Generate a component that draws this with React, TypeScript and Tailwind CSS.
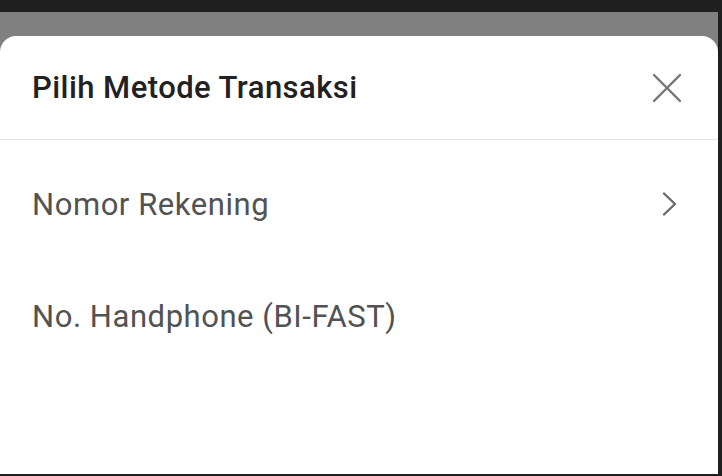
import React from "react";

const CloseIcon = () => (
  <svg width="30" height="30" viewBox="0 0 30 30" fill="none" stroke="#757575" strokeWidth="2.4" strokeLinecap="round">
    <path d="M2 2 L28 28 M28 2 L2 28" />
  </svg>
);

const Chevron = () => (
  <svg width="16" height="24" viewBox="0 0 16 24" fill="none" stroke="#6b6b6b" strokeWidth="2.4" strokeLinecap="round" strokeLinejoin="round">
    <path d="M2 1.5 L13 12 L2 22.5" />
  </svg>
);

const methods = [
  { label: "Nomor Rekening", arrow: true },
  { label: "No. Handphone (BI-FAST)", arrow: false },
];

export default function App() {
  return (
    <div
      className="w-[722px] h-[476px] bg-[#1f1f1f] flex flex-col overflow-hidden"
      style={{ fontFamily: "Roboto, 'Liberation Sans', sans-serif" }}
    >
      <div className="h-[12px] shrink-0" />
      <div className="flex-1 flex flex-col w-[718px] pb-[2px]">
        <div className="h-[24px] bg-[#808080] shrink-0" />
        <div className="flex-1 bg-[#808080]">
          <div className="h-full bg-white rounded-t-[16px] flex flex-col">
            <div className="h-[104px] flex items-center justify-between pl-[32px] pr-[36px] border-b border-[#e3e3e3]">
              <h1 className="text-[31px] font-medium text-[#212121] tracking-[0.45px] leading-none">Pilih Metode Transaksi</h1>
              <button className="flex items-center justify-center">
                <CloseIcon />
              </button>
            </div>
            <div className="pt-[8px] flex flex-col">
              {methods.map(({ label, arrow }) => (
                <div key={label} className="h-[112px] flex items-center justify-between pl-[32px] pr-[40px]">
                  <span className="text-[31px] text-[#525252] tracking-[0.55px] leading-none">{label}</span>
                  {arrow ? <Chevron /> : null}
                </div>
              ))}
            </div>
          </div>
        </div>
      </div>
    </div>
  );
}
